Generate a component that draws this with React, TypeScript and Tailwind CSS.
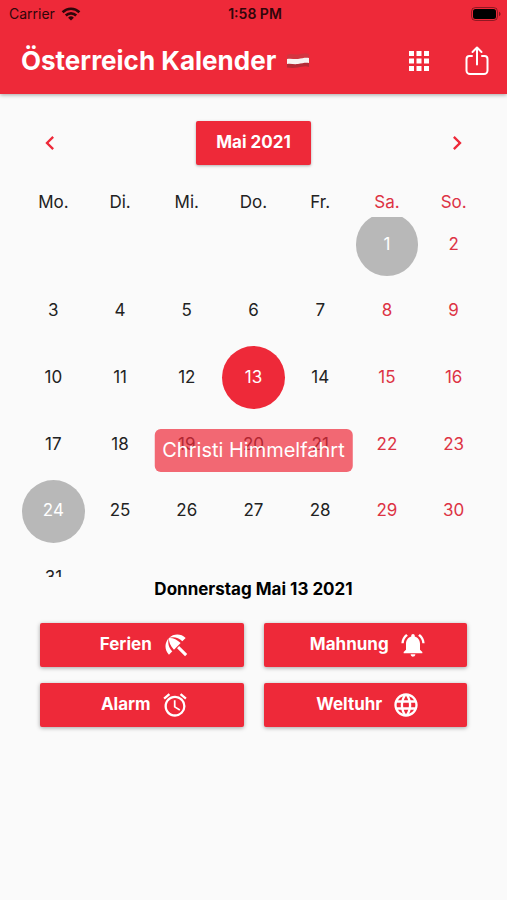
import {
  MdAlarm,
  MdApps,
  MdChevronLeft,
  MdChevronRight,
  MdLanguage,
  MdNotificationsActive,
} from 'react-icons/md';

const weekdays = ['Mo.', 'Di.', 'Mi.', 'Do.', 'Fr.', 'Sa.', 'So.'];

// May 2021 starts on a Saturday
const leadingBlanks = 5;
const daysInMonth = 31;
const holidays = [1, 24];
const selectedDay = 13;

const UmbrellaIcon = ({ size }: { size: number }) => (
  <svg width={size} height={size} viewBox="0 0 24 24" fill="currentColor" aria-hidden="true">
    <path d="M12.9 14.7l1.8-1.8 6.9 6.9-1.8 1.8z" />
    <path d="M17.42 8.83l2.86-2.86c-3.95-3.95-10.35-3.96-14.3-.02 3.93-1.3 8.31-.25 11.44 2.88zM5.95 5.98c-3.94 3.95-3.93 10.35.02 14.3l2.86-2.86C5.7 14.29 4.65 9.91 5.95 5.98zM5.97 5.96l-.01.01c-.38 3.01 1.17 6.88 4.3 10.02l5.73-5.73c-3.13-3.13-7.01-4.68-10.02-4.3z" />
  </svg>
);

const actions = [
  { label: 'Ferien', icon: UmbrellaIcon },
  { label: 'Mahnung', icon: MdNotificationsActive },
  { label: 'Alarm', icon: MdAlarm },
  { label: 'Weltuhr', icon: MdLanguage },
];

const WifiIcon = () => (
  <svg width="20" height="14" viewBox="0 0 20 14" fill="none" stroke="currentColor" strokeWidth="2.6" aria-hidden="true">
    <path d="M1.6 5.2a12 12 0 0 1 16.8 0" />
    <path d="M4.8 8.5a7.4 7.4 0 0 1 10.4 0" />
    <path d="M10 13.6 7.1 10.7a4.1 4.1 0 0 1 5.8 0z" fill="currentColor" stroke="none" />
  </svg>
);

const BatteryIcon = () => (
  <svg width="30" height="14" viewBox="0 0 30 14" aria-hidden="true">
    <rect x="0.5" y="0.5" width="26" height="13" rx="4" fill="none" stroke="#000" strokeOpacity="0.4" />
    <rect x="2" y="2" width="23" height="10" rx="2.5" fill="#000" />
    <path d="M28 4.8v4.4c1-.4 1.5-1.2 1.5-2.2S29 5.2 28 4.8z" fill="#000" fillOpacity="0.45" />
  </svg>
);

const FlagIcon = () => (
  <svg width="24" height="18" viewBox="0 0 24 18" role="img" aria-label="Österreich">
    <path d="M1 3c4-2 7 0 11-.5s7-2 11-.5v6H1z" fill="#d2353f" />
    <path d="M1 9h22v6c-4-1.5-7 0-11 .5s-7 .5-11 0z" fill="#b32a34" />
    <path d="M1 7c4-1 7 .5 11 0s7-1.5 11-1v5c-4-.5-7 .5-11 1s-7-.5-11 0z" fill="#f7f3f1" />
  </svg>
);

const ShareIcon = () => (
  <svg width="24" height="30" viewBox="0 0 24 30" fill="none" stroke="currentColor" strokeWidth="2" strokeLinecap="round" strokeLinejoin="round" aria-hidden="true">
    <path d="M7 10H4.5a3 3 0 0 0-3 3v11.5A3.5 3.5 0 0 0 5 28h14a3.500 3.500 0 0 0 3.500-3.500V13a3 3 0 0 0-3-3H17" />
    <path d="M12 18.5V2M7.5 6 12 1.5 16.5 6" />
  </svg>
);

const dayStyle = (day: number, column: number) => {
  if (day === selectedDay) return 'bg-[#ee2939] text-white';
  if (holidays.includes(day)) return 'bg-[#b8b8b8] text-white';
  return column > 4 ? 'text-[#dd3344]' : 'text-[#222222]';
};

const Header = () => (
  <header className="relative bg-[#ee2939] shadow-[0_1px_4px_rgba(0,0,0,0.35)]">
    <div className="grid h-[27px] grid-cols-3 items-center pr-1.5 pl-[9px] text-sm text-[#30060a]">
      <div className="flex items-center gap-1.5">
        <span>Carrier</span>
        <WifiIcon />
      </div>
      <span className="text-center font-semibold">1:58 PM</span>
      <div className="flex justify-end">
        <BatteryIcon />
      </div>
    </div>
    <div className="flex h-[67px] items-center justify-between pr-[18px] pl-[21px] text-white">
      <h1 className="flex items-center gap-2.5 text-[26px] font-bold whitespace-nowrap">
        Österreich Kalender
        <FlagIcon />
      </h1>
      <div className="flex items-center gap-[31px]">
        <button type="button" aria-label="Übersicht">
          <MdApps size={30} />
        </button>
        <button type="button" aria-label="Teilen">
          <ShareIcon />
        </button>
      </div>
    </div>
  </header>
);

const Calendar = () => (
  <section className="px-5 pt-[27px]">
    <div className="flex items-center justify-between px-4">
      <button type="button" aria-label="Voriger Monat" className="text-[#ee2939]">
        <MdChevronLeft size={28} />
      </button>
      <button type="button" className="h-11 rounded-xs bg-[#ee2939] px-5 text-[17px] font-bold text-white shadow-[0_1px_3px_rgba(0,0,0,0.3)]">
        Mai 2021
      </button>
      <button type="button" aria-label="Nächster Monat" className="text-[#ee2939]">
        <MdChevronRight size={28} />
      </button>
    </div>

    <div className="mt-[23px] grid grid-cols-7 pb-px text-center text-[17px] leading-7">
      {weekdays.map((name, i) => (
        <span key={name} className={i > 4 ? 'text-[#dd3344]' : 'text-[#222222]'}>
          {name}
        </span>
      ))}
    </div>

    <div className="relative">
      <div className="h-[360px] overflow-hidden">
        <div className="-mt-1.5 grid grid-cols-7">
          {Array.from({ length: leadingBlanks }, (_, i) => (
            <span key={`blank-${i}`} />
          ))}
          {Array.from({ length: daysInMonth }, (_, i) => {
            const day = i + 1;
            const column = (leadingBlanks + i) % 7;
            return (
              <div key={day} className="aspect-square p-0.5">
                <button
                  type="button"
                  className={`h-full w-full rounded-full text-[17px] ${dayStyle(day, column)}`}
                >
                  {day}
                </button>
              </div>
            );
          })}
        </div>
      </div>

      <div
        role="tooltip"
        className="absolute top-[212px] left-1/2 -translate-x-1/2 rounded-md bg-[#ee2939]/70 px-2 py-2 text-xl leading-[27px] whitespace-nowrap text-white"
      >
        Christi Himmelfahrt
      </div>
    </div>
  </section>
);

const App = () => {
  return (
    <div className="min-h-screen bg-[#fafafa] font-['Inter',sans-serif]">
      <Header />
      <main>
        <Calendar />
        <p className="text-center text-[17px] leading-6 font-bold text-black">
          Donnerstag Mai 13 2021
        </p>
        <div className="mt-[22px] grid grid-cols-2 gap-x-5 gap-y-4 px-10">
          {actions.map((action) => (
            <button
              key={action.label}
              type="button"
              className="flex h-11 items-center justify-center gap-2.5 rounded-xs bg-[#ee2939] pl-1.5 text-[17px] font-bold text-white shadow-[0_1px_4px_rgba(0,0,0,0.35)]"
            >
              {action.label}
              <action.icon size={28} />
            </button>
          ))}
        </div>
      </main>
    </div>
  );
};

export default App;
